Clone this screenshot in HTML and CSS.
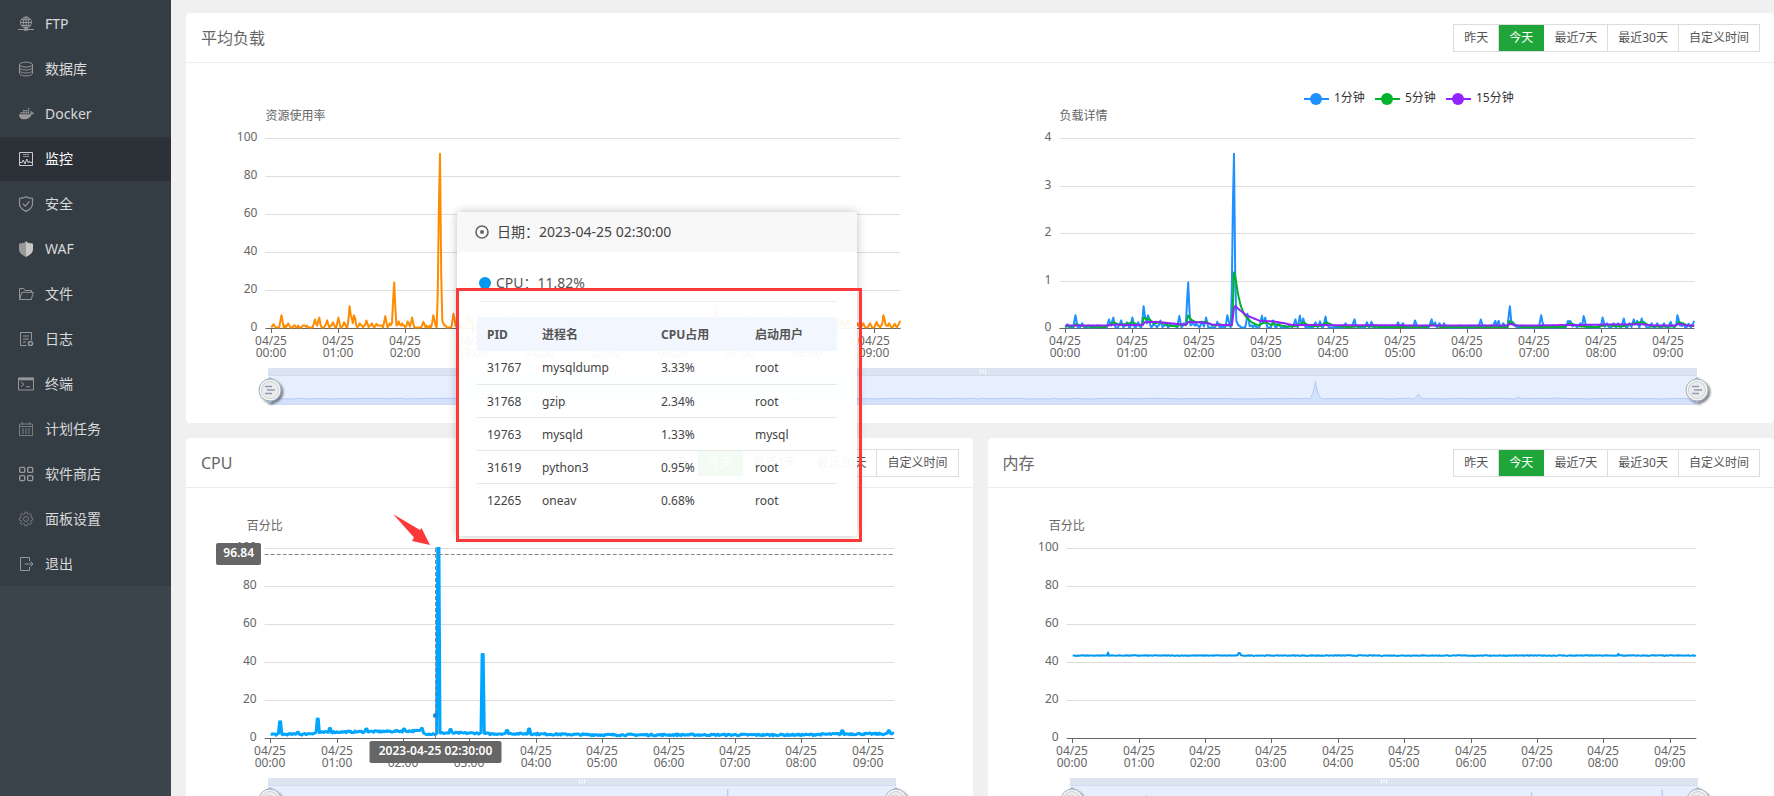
FILE: index.html
```html
<!DOCTYPE html>
<html lang="zh-CN">
<head>
<meta charset="utf-8">
<title>监控</title>
<link rel="stylesheet" href="styles.css">
</head>
<body>
<div class="app">
  <aside class="sidebar">
    <nav class="menu">
      <a class="menu-item" href="#ftp"><svg class="icon" viewBox="0 0 16 16"><circle cx="8" cy="6.5" r="5.5"/><ellipse cx="8" cy="6.5" rx="2.6" ry="5.5"/><path d="M8 1v11M2.5 6.5h11M3.4 3.6h9.2M3.4 9.4h9.2M0 13.5h16" /><path d="M6 13.5h4" stroke-width="2.4"/></svg><span>FTP</span></a>
      <a class="menu-item" href="#database"><svg class="icon" viewBox="0 0 16 16"><ellipse cx="8" cy="3.6" rx="6.5" ry="2.5"/><path d="M1.500 3.600v8.800c0 1.400 2.900 2.500 6.500 2.500s6.500-1.100 6.500-2.500V3.600M1.500 6.500c0 1.400 2.900 2.500 6.500 2.500s6.500-1.100 6.500-2.500M1.500 9.500c0 1.400 2.900 2.500 6.500 2.500s6.500-1.100 6.500-2.500"/></svg><span>数据库</span></a>
      <a class="menu-item" href="#docker"><svg class="icon solid" viewBox="0 0 16 16"><path d="M1 8.200h10.600c.9 0 1.300-.4 1.200-1.400-.5-.8-.4-1.500.1-2.100.7.500 1 1.100 1 1.800.8-.1 1.600 0 2.100.4-.3.900-1.200 1.400-2.300 1.400-1.200 3.400-3.500 5-7.200 5C2.800 13.300.9 11.600 1 8.200zM2.600 6h1.800v1.600H2.600zM5 6h1.800v1.600H5zM7.400 6h1.800v1.600H7.400zM9.800 6h1.500v1.600H9.800zM5 3.900h1.800v1.500H5zM7.400 3.900h1.800v1.500H7.400zM9.800 3.900h1.500v1.500H9.800zM9.800 2h1.500v1.300H9.800z"/></svg><span>Docker</span></a>
      <a class="menu-item active" href="#monitor" aria-current="page"><svg class="icon" viewBox="0 0 16 16"><path d="M1.500 1.500h13v13h-13zM2 11.500h2l1.200-2.500 1.800 4L8.800 8l1.700 4 1-2 .8 1.500H14"/><path d="M5 3.500h6M5 5.500h6" stroke-opacity=".6"/></svg><span>监控</span></a>
      <a class="menu-item" href="#security"><svg class="icon" viewBox="0 0 16 16"><path d="M8 .8c1.800 1 4 1.500 6.500 1.500v5.500c0 3.800-2.500 5.800-6.500 7.600C4 13.600 1.500 11.600 1.500 7.800V2.300C4 2.300 6.200 1.800 8 .8zM4.800 7.600l2.500 2.600 4.200-4.800" stroke-width="1.200"/></svg><span>安全</span></a>
      <a class="menu-item" href="#waf"><svg class="icon solid" viewBox="0 0 16 16"><path d="M8 0v16C3.500 13.600 1 11.800 1 8V3l1.400-1 1.200.8 1-1.300 1.200.8z"/><path class="bright" d="M8 0v16c4.500-2.400 7-4.200 7-8V3l-1.400-1-1.200.8-1-1.300-1.200.8z"/></svg><span>WAF</span></a>
      <a class="menu-item" href="#files"><svg class="icon" viewBox="0 0 16 16"><path d="M1.500 13.500v-11h4.200l1.300 2h6.500v1.800M1.500 13.500L3.800 6.300h11.500l-2 7.200z"/></svg><span>文件</span></a>
      <a class="menu-item" href="#logs"><svg class="icon" viewBox="0 0 16 16"><path d="M8.500 14.500h-6v-13h11v7.500M5 5h6M5 8h6M5 11h3"/><circle cx="12.500" cy="12.500" r="2" stroke-width="1.500"/></svg><span>日志</span></a>
      <a class="menu-item" href="#terminal"><svg class="icon" viewBox="0 0 16 16"><path d="M.5 2h15v12H.5zM3 6l3 2.300-3 2.300M8 10.800h4"/><path d="M.5 3h15" stroke-width="2.600"/></svg><span>终端</span></a>
      <a class="menu-item" href="#cron"><svg class="icon dim" viewBox="0 0 16 16"><path d="M1.500 3h13v11.500h-13zM1.500 5.500h13M4.500 1v3M11.500 1v3"/><path d="M4 8h2M7 8h2M10 8h2M4 10h2M7 10h2M10 10h2M4 12h2M7 12h2M10 12h2"/></svg><span>计划任务</span></a>
      <a class="menu-item" href="#store"><svg class="icon thick" viewBox="0 0 16 16"><rect x="1.700" y="1.400" width="5" height="5" rx="1"/><rect x="9.700" y="1.400" width="5" height="5" rx="1"/><rect x="1.700" y="9.600" width="5" height="5" rx="1"/><rect x="9.700" y="9.600" width="5" height="5" rx="1"/></svg><span>软件商店</span></a>
      <a class="menu-item" href="#settings"><svg class="icon dim" viewBox="0 0 16 16"><path d="M6.500 3l.5-1.800h2L9.500 3l1 .4 1.700-1 1.400 1.400-1 1.700.4 1 1.800.5v2l-1.800.5-.4 1 1 1.700-1.400 1.400-1.700-1-1 .4L9 14.800H7L6.500 13l-1-.4-1.700 1-1.400-1.400 1-1.700-.4-1L1.200 9V7L3 6.500l.4-1-1-1.700 1.400-1.400 1.700 1z"/><circle cx="8" cy="8" r="2.500"/></svg><span>面板设置</span></a>
      <a class="menu-item" href="#logout"><svg class="icon" viewBox="0 0 16 16"><path d="M11.500 5V1.500h-9v13h9V11M6.500 8h8.500M12.500 5.500L15 8l-2.500 2.500"/></svg><span>退出</span></a>
    </nav>
  </aside>

  <main class="content">
    <section class="panel">
      <header class="panel-head">
        <h2>平均负载</h2>
        <div class="range"><button type="button">昨天</button><button type="button" class="on">今天</button><button type="button">最近7天</button><button type="button">最近30天</button><button type="button">自定义时间</button></div>
      </header>
      <div class="chart chart-load" id="load"></div>
    </section>
    <div class="row">
      <section class="panel">
        <header class="panel-head">
          <h2>CPU</h2>
          <div class="range"><button type="button">昨天</button><button type="button" class="on">今天</button><button type="button">最近7天</button><button type="button">最近30天</button><button type="button">自定义时间</button></div>
        </header>
        <div class="chart" id="cpu"></div>
      </section>
      <section class="panel">
        <header class="panel-head">
          <h2>内存</h2>
          <div class="range"><button type="button">昨天</button><button type="button" class="on">今天</button><button type="button">最近7天</button><button type="button">最近30天</button><button type="button">自定义时间</button></div>
        </header>
        <div class="chart" id="memory"></div>
      </section>
    </div>

    <div class="tooltip" role="tooltip">
      <div class="tooltip-date"><svg class="target" viewBox="0 0 14 14"><circle cx="7" cy="7" r="6"/><circle class="dot" cx="7" cy="7" r="2"/></svg><span>日期：2023-04-25 02:30:00</span></div>
      <div class="tooltip-body">
        <p class="tooltip-value"><i class="bullet"></i><span>CPU：11.82%</span></p>
        <table>
          <thead><tr><th class="c-pid">PID</th><th class="c-name">进程名</th><th class="c-cpu">CPU占用</th><th>启动用户</th></tr></thead>
          <tbody>
            <tr><td>31767</td><td>mysqldump</td><td>3.33%</td><td>root</td></tr>
            <tr><td>31768</td><td>gzip</td><td>2.34%</td><td>root</td></tr>
            <tr><td>19763</td><td>mysqld</td><td>1.33%</td><td>mysql</td></tr>
            <tr><td>31619</td><td>python3</td><td>0.95%</td><td>root</td></tr>
            <tr><td>12265</td><td>oneav</td><td>0.68%</td><td>root</td></tr>
          </tbody>
        </table>
      </div>
    </div>
    <div class="mark-box"></div>
    <svg class="mark-arrow" viewBox="0 0 38 32"><path d="M0.300 0.300L27 16l1.500-2L37 31 19 27l2-3.500z"/></svg>
  </main>
</div>
<script src="charts.js"></script>
</body>
</html>
```

FILE: styles.css
```css
* { box-sizing: border-box; }
body {
  margin: 0;
  background: #f0f0f0;
  color: #666;
  font: 12px/18px "Noto Sans", "Noto Sans CJK SC", sans-serif;
}
.app { display: flex; height: 100vh; overflow: hidden; }

.sidebar { flex: 0 0 171px; background: #3c444d; }
.menu { display: flex; flex-direction: column; gap: 1px; padding-top: 2px; background: #353d44; }
.menu-item {
  display: flex; align-items: center; gap: 11px;
  height: 44px; padding-left: 18px;
  color: #d8d9da; font-size: 14px; line-height: 20px; text-decoration: none;
}
.menu-item.active { background: #2c3138; color: #fff; }
.icon { width: 16px; height: 16px; fill: none; stroke: #95989b; stroke-width: 1; }
.icon.thick { stroke-width: 1.4; }
.icon.dim { stroke: #777c81; }
.icon.solid { fill: #999; stroke: none; }
.icon .bright { fill: #c8c8c8; }
.active .icon { stroke: #ccc; }

.content {
  position: relative; flex: 1; min-width: 0;
  display: flex; flex-direction: column; gap: 15px;
  padding: 13px 0 0 15px;
}
.row { display: grid; grid-template-columns: 1fr 1fr; gap: 15px; }
.panel { min-width: 0; background: #fff; border-radius: 4px; }
.panel-head {
  display: flex; align-items: center; justify-content: space-between;
  height: 50px; padding: 0 14px 0 15px; border-bottom: 1px solid #ececec;
}
.panel-head h2 { margin: 0; font-size: 16px; line-height: 24px; font-weight: 400; }
.range { display: flex; border: 1px solid #ddd; }
.range button {
  height: 26px; padding: 0 10px; border: 0; border-right: 1px solid #ddd;
  background: #fff; color: #555; font: inherit; line-height: 24px;
}
.range button:last-child { border-right: 0; }
.range .on { background: #20a53a; border-color: #20a53a; color: #fff; }

.chart { height: 345px; }
.chart-load { height: 360px; }
.chart svg { display: block; width: 100%; height: 100%; }
.chart text { font-size: 12px; fill: #666; }
.chart .legend { fill: #333; }
.chart .end { text-anchor: end; }
.chart .mid { text-anchor: middle; }
.chart .flag { fill: #fff; font-weight: 600; text-anchor: middle; }

.tooltip {
  position: absolute; left: 286px; top: 212px; width: 400px;
  border-radius: 4px; background: rgba(255, 255, 255, 0.95);
  box-shadow: 0 0 10px rgba(0, 0, 0, 0.25);
  color: #555;
}
.tooltip-date {
  display: flex; align-items: center; gap: 8px;
  height: 40px; padding-left: 18px; border-radius: 4px 4px 0 0;
  background: #f8f8f8; color: #444; font-size: 14px;
}
.target { width: 14px; height: 14px; fill: none; stroke: #666; stroke-width: 1.6; }
.target .dot { fill: #666; stroke: none; }
.tooltip-body { padding: 12px 20px 20px; }
.tooltip-value {
  display: flex; align-items: center; gap: 5px;
  height: 38px; margin: 0 0 15px 2px; border-bottom: 1px solid #eee;
  font-size: 14px;
}
.bullet { width: 12px; height: 12px; border-radius: 50%; background: #0099ee; }
.tooltip table { width: 100%; border-collapse: collapse; table-layout: fixed; }
.tooltip th, .tooltip td { height: 33px; padding: 2px 0 0 10px; text-align: left; }
.tooltip th { height: 34px; background: rgba(241, 245, 254, 0.9); font-weight: 700; }
.tooltip td { border-bottom: 1px solid #e8e8e8; color: #444; }
.tooltip tbody tr:last-child td { border-bottom: 0; }
.c-pid { width: 55px; }
.c-name { width: 119px; }
.c-cpu { width: 94px; }

.mark-box {
  position: absolute; left: 285px; top: 288px; width: 406px; height: 254px;
  border: 3px solid #fd3838;
}
.mark-arrow { position: absolute; left: 222px; top: 514px; width: 38px; height: 32px; fill: #fd3838; }
```

FILE: charts.js
```js
const HOURS = 9.39;
const STEP = 1 / 60;

/* One-minute load peaks: [hour, value] */
const LOAD_PEAKS = [
  [0.03, .08], [0.15, .27], [0.25, .1], [0.5, .05], [0.65, .18], [0.71, .22], [0.83, .16], [0.92, .12], [1, .22], [1.09, .12],
  [1.17, .46], [1.2, .2], [1.24, .27], [1.32, .1], [1.42, .16], [1.5, .1], [1.57, .09], [1.7, .25], [1.77, .1], [1.83, .96], [1.9, .14],
  [1.95, .1], [2.04, .14], [2.1, .22], [2.27, .13], [2.42, .27], [2.51, 3.67], [2.72, .3], [2.93, .26],
  [2.98, .22], [3.1, .16], [3.18, .1], [3.43, .18], [3.5, .26], [3.55, .2], [3.73, .12], [3.8, .14], [3.88, .24],
  [4.18, .1], [4.31, .18], [4.5, .12], [4.57, .13], [4.96, .12], [5.04, .1], [5.22, .16], [5.46, .18],
  [5.51, .12], [5.58, .1], [5.65, .1], [6.2, .18], [6.41, .15], [6.46, .15], [6.54, .1], [6.63, .46], [6.68, .12], [7.1, .27],
  [7.5, .15], [7.54, .15], [7.69, .1], [7.74, .25], [8.02, .22], [8.08, .1], [8.18, .1], [8.25, .1], [8.33, .2], [8.42, .1],
  [8.48, .18], [8.53, .15], [8.6, .2], [8.64, .13], [8.75, .1], [8.83, .1], [8.93, .1], [9.03, .13], [9.14, .27], [9.22, .1], [9.3, .09], [9.38, .15]
];
const LOAD5 = [
  [0, .03], [.13, .03], [.15, .08], [.3, .03], [.6, .02], [.72, .12], [.8, .07], [.9, .08], [1, .12], [1.1, .05], [1.15, .06],
  [1.17, .24], [1.21, .18], [1.24, .2], [1.32, .1], [1.42, .12], [1.55, .05], [1.68, .03], [1.7, .08], [1.8, .06], [1.83, .27],
  [1.88, .17], [1.95, .12], [2.1, .13], [2.2, .05], [2.3, .08], [2.4, .05], [2.49, .06], [2.515, 1.18], [2.54, 1.05], [2.57, .75], [2.62, .45],
  [2.67, .28], [2.72, .2], [2.78, .12], [2.88, .05], [2.94, .1], [3, .12], [3.07, .06], [3.1, .09], [3.3, .03], [3.45, .04],
  [3.55, .12], [3.65, .04], [3.8, .04], [3.9, .12], [4, .05], [4.2, .02], [4.5, .04], [4.7, .02], [5.4, .02], [5.47, .08], [5.6, .02],
  [6.6, .02], [6.63, .15], [6.72, .06], [6.8, .02], [7.45, .02], [7.53, .1], [7.7, .03], [7.95, .02], [8.05, .06], [8.3, .03],
  [8.6, .13], [8.75, .03], [9.1, .03], [9.15, .13], [9.3, .05], [9.38, .04]
];
const LOAD15 = [
  [0, .05], [.6, .05], [.72, .07], [1.15, .06], [1.18, .12], [1.35, .13], [1.7, .08], [1.8, .07], [1.84, .13], [2.1, .11], [2.2, .07],
  [2.49, .06], [2.51, .4], [2.53, .47], [2.6, .38], [2.7, .27], [2.8, .21], [2.9, .15], [3.1, .14], [3.3, .09], [3.4, .06],
  [3.9, .06], [6.6, .05], [6.63, .09], [6.75, .05], [8.6, .08], [8.8, .05], [9.1, .05], [9.15, .09], [9.3, .05], [9.38, .05]
];
const CPU_BASE = [[0, 1.8], [.5, 1.8], [.7, 2.7], [1, 3], [1.5, 3.2], [2.25, 3.6], [2.35, 2], [2.48, 2], [2.6, 2.5], [3.1, 2.4], [3.3, 2], [3.6, 2.2], [4.3, 1.8], [5, 1.5], [8, 1.5], [8.6, 2], [9.38, 2]];
const CPU_PEAKS = [[.14, 8.5], [.4, 3], [.7, 10], [.88, 5], [1.43, 4.8], [2, 4.8], [2.27, 5], [3.18, 44], [2.7, 4.5], [3.55, 4], [3.88, 4.8], [8.6, 3.8], [9.3, 3.8]];
const MEMORY_PEAKS = [[.53, 45], [2.5, 44.8], [2.52, 44.8], [8.22, 44.3]];

let seed = 7;
const noise = () => { seed = (seed * 16807) % 2147483647; return seed / 2147483647; };
const lerp = (pts, t) => {
  for (let i = 1; i < pts.length; i++) {
    if (t <= pts[i][0]) {
      const [a, b] = [pts[i - 1], pts[i]];
      return a[1] + (b[1] - a[1]) * (t - a[0]) / (b[0] - a[0]);
    }
  }
  return pts[pts.length - 1][1];
};
const sample = fn => Array.from({ length: Math.round(HOURS / STEP) + 1 }, (_, i) => [i * STEP, fn(i * STEP)]);
const bump = (peaks, t, w) => Math.max(0, ...peaks.map(([h, v]) => v * Math.max(0, 1 - Math.abs(t - h) / w)));
/* Put each peak's full value on its nearest sample(s) */
const snap = (pts, peaks, count) => peaks.forEach(([h, v]) => {
  const i = Math.min(pts.length - 1, Math.round(h / STEP));
  for (let k = i; k < Math.min(pts.length, i + count); k++) pts[k][1] = v;
});

const load1 = sample(t => {
  const tail = t > 2.5 ? .3 * Math.max(0, 1 - (t - 2.5) / .1) : 0;
  return Math.max(bump(LOAD_PEAKS, t, .034), tail, noise() > .8 ? .05 : .01);
});
snap(load1, LOAD_PEAKS, 1);
const cpu = sample(t => (t > 2.505 && t < 2.545) ? 105 : lerp(CPU_BASE, t) + noise() * .9 - .3);
snap(cpu, CPU_PEAKS, 2);
const memory = sample(() => 43.2 + noise() * .4);
snap(memory, MEMORY_PEAKS, 1);

const line = (pts, x, y, color, w) =>
  `<polyline fill="none" stroke="${color}" stroke-width="${w}" stroke-linejoin="round" points="${pts.map(p => x(p[0]).toFixed(1) + ',' + y(p[1]).toFixed(1)).join(' ')}"/>`;

function grid(o) {
  const { left, width, top, max, step, title, titleMid, series } = o;
  const bottom = top + 190;
  const x = t => left + 6 + t * (width - 6) / HOURS;
  const y = v => bottom - v * 190 / max;
  let s = '';
  for (let v = 0; v <= max; v += step) {
    const gy = Math.round(y(v)) + .5;
    s += `<path d="M${left} ${gy}H${left + width}" stroke="${v ? '#ddd' : '#666'}"/><text class="end" x="${left - 8}" y="${gy + 2.5}">${v}</text>`;
  }
  s += `<text class="${titleMid ? 'mid' : ''}" x="${left}" y="${top - 18}">${title}</text>`;
  for (let h = 0; h <= 9; h++) {
    const gx = Math.floor(x(h)) + .5;
    s += `<path d="M${gx} ${bottom}v5" stroke="#666"/><text class="mid" x="${gx - .5}" y="${bottom + 17}">04/25</text><text class="mid" x="${gx - .5}" y="${bottom + 29}">0${h}:00</text>`;
  }
  const id = 'clip' + title.length + '-' + Math.round(left) + '-' + max + '-' + series.length + series[0][1].slice(1);
  s += `<clipPath id="${id}"><rect x="${left}" y="${top - 1}" width="${width + 1}" height="192"/></clipPath><g clip-path="url(#${id})">`;
  series.forEach(([pts, color, w]) => { s += line(pts, x, y, color, w); });
  return { svg: s + '</g>', x, y, bottom };
}

function slider(x1, x2, top, spikes) {
  const w = x2 - x1, base = top + 31;
  let d = `M${x1} ${base}`, pos = x1;
  spikes.forEach(([f, h, half]) => {
    const c = x1 + f * w;
    for (; pos < c - half; pos += 8) d += `L${pos.toFixed(1)} ${(base - noise() * .8).toFixed(1)}`;
    d += `L${c - half} ${base}Q${c - half / 4} ${base - h / 4} ${c} ${base - h}Q${c + half / 4} ${base - h / 4} ${c + half} ${base}`;
    pos = c + half;
  });
  for (; pos < x2; pos += 8) d += `L${pos.toFixed(1)} ${(base - noise() * .8).toFixed(1)}`;
  d += `L${x2} ${base}`;
  const mid = Math.round((x1 + x2) / 2), cy = top + 22;
  const handle = cx => `<g filter="url(#shade)"><path d="M${cx - 4} ${cy - 10}l4-3 4 3zM${cx - 4} ${cy + 10}l4 3 4-3z" fill="#a9b9d0"/><circle cx="${cx}" cy="${cy}" r="11" fill="#f6f6f6" stroke="#a0aec4"/><circle cx="${cx}" cy="${cy}" r="8.500" fill="#ececec" stroke="#cfcfcf"/><path d="M${cx - 5} ${cy - 3.5}h7M${cx - 3} ${cy}h8M${cx - 5} ${cy + 3.5}h7" stroke="#8e9bb5" stroke-width="1.6"/></g>`;
  return `<rect x="${x1}" y="${top}" width="${w}" height="37" fill="#e7eefd"/><path d="${d}V${top + 37}H${x1}z" fill="#d4e1fc"/><path d="${d}" fill="none" stroke="#b5cbf5"/>` +
    `<rect x="${x1}" y="${top}" width="${w}" height="7" fill="#dce4f1"/><path d="M${x1} ${top + 7.5}h${w}M${x1} ${top + 36.5}h${w}" stroke="#d2dcef"/>` +
    `<path d="M${mid - 2.5} ${top + 1.5}v4M${mid} ${top + 1.5}v4M${mid + 2.5} ${top + 1.5}v4" stroke="#fff"/>${handle(x1 + 2)}${handle(x2)}`;
}

const defs = '<defs><filter id="shade" x="-30%" y="-30%" width="170%" height="170%"><feDropShadow dx="2" dy="2" stdDeviation="1.2" flood-color="#333" flood-opacity=".6"/></filter></defs>';
const mount = (id, build) => {
  const el = document.getElementById(id);
  el.innerHTML = `<svg role="img">${defs}${build(el.clientWidth)}</svg>`;
};

function draw() {
  mount('load', w => {
    const a = grid({ left: w * .05, width: w * .4, top: 75, max: 100, step: 20, title: '资源使用率', series: [[load1.map(p => [p[0], p[1] * 25]), '#ff8c00', 2]] });
    const b = grid({ left: w * .55, width: w * .4, top: 75, max: 4, step: 1, title: '负载详情', series: [[load1, '#1e90ff', 2], [sample(t => lerp(LOAD5, t)), '#00b32c', 2], [sample(t => lerp(LOAD15, t)), '#9224ff', 2]] });
    const lx = Math.floor(w * .705) - 1;
    const legend = [['#1e90ff', '1分钟', 0], ['#00b32c', '5分钟', 71], ['#9224ff', '15分钟', 142]]
      .map(([c, t, dx]) => `<path d="M${lx + dx} 36h25" stroke="${c}" stroke-width="2"/><circle cx="${lx + dx + 12}" cy="36" r="6" fill="${c}"/><text class="legend" x="${lx + dx + 30}" y="39">${t}</text>`).join('');
    return a.svg + b.svg + legend + slider(Math.round(w * .05) + 3, Math.round(w * .95) + 2, 305, [[.1, 1, 4], [.25, 1, 4], [.5, 1, 4], [.55, 1, 5], [.733, 18, 6], [.805, 5, 5], [.875, 2, 5]]);
  });
  mount('cpu', w => {
    const g = grid({ left: w * .1, width: w * .8, top: 60, max: 100, step: 20, title: '百分比', titleMid: true, series: [[cpu, '#00a5ff', 3]] });
    const cx = Math.floor(g.x(2.5)) - .5, cy = 66.5, l = w * .1;
    return g.svg + `<circle cx="${cx}" cy="${g.y(11.82)}" r="2.500" fill="#0090e0"/><path d="M${l} ${cy}H${w * .9}M${cx} 60V250" stroke="#888" stroke-dasharray="4 2"/>` +
      `<rect x="${Math.round(l) - 49}" y="55" width="45" height="22" rx="2" fill="#666"/><text class="flag" x="${l - 26}" y="69">96.84</text>` +
      `<rect x="${cx - 66}" y="253" width="132" height="22" rx="2" fill="#666"/><text class="flag" x="${cx}" y="267">2023-04-25 02:30:00</text>` +
      slider(Math.round(w * .1) + 3, Math.round(w * .9) + 2, 290, [[.732, 20, 2]]);
  });
  mount('memory', w => {
    const g = grid({ left: w * .1, width: w * .8, top: 60, max: 100, step: 20, title: '百分比', titleMid: true, series: [[memory, '#0099ee', 2]] });
    return g.svg + slider(Math.round(w * .1) + 3, Math.round(w * .9) + 2, 290, [[.122, 14, 2], [.735, 17, 2], [.943, 19, 1]]);
  });
}
draw();
addEventListener('resize', draw);
```
